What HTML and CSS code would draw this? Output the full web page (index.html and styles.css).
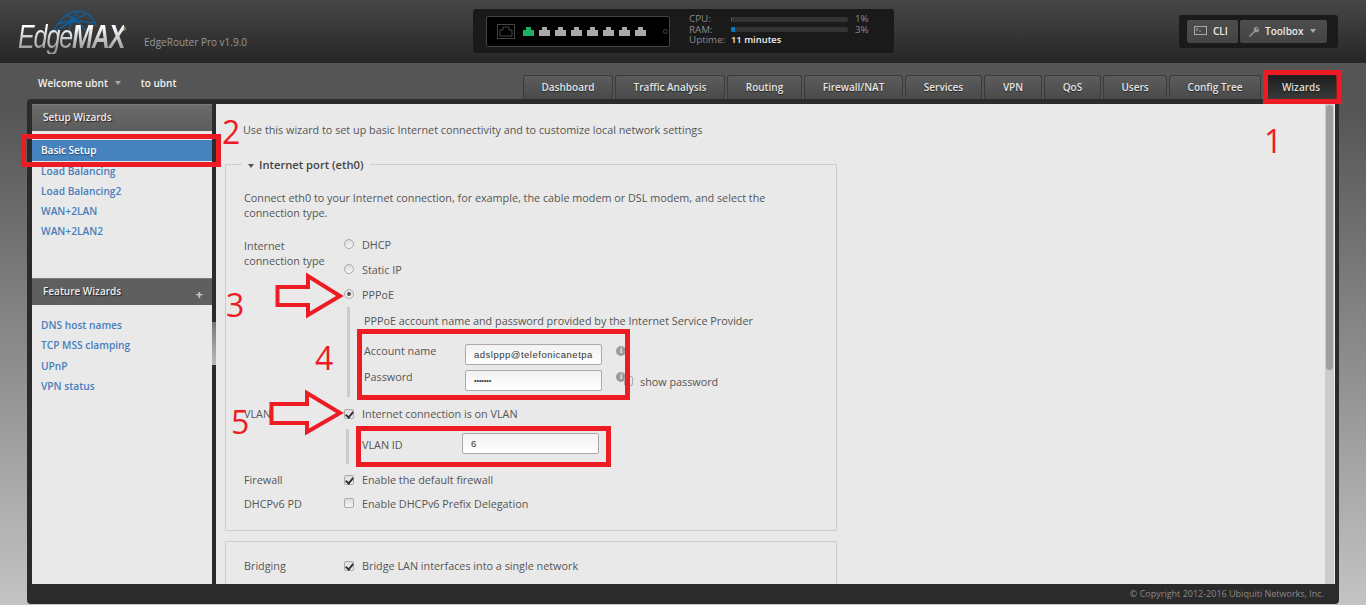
FILE: index.html
```html
<!DOCTYPE html>
<html lang="en">
<head>
<meta charset="utf-8">
<title>EdgeMAX</title>
<link rel="stylesheet" href="styles.css">
</head>
<body>
<div class="page">
  <header class="topbar">
    <div class="brand">
      <div class="logo">
        <svg class="globe" width="46" height="26" viewBox="0 0 46 26"><g fill="none" stroke="#0f5f9e" stroke-width="1.4"><path d="M1 24C5 10 17 1 27 1c8 0 15 7 17 16"/><path d="M5 14c9-3 22-4 36-1"/><path d="M27 1C20 7 17 15 17 25"/><path d="M13 4c8 4 18 11 23 20"/><path d="M4 21c8-6 20-12 30-17"/></g><circle cx="20" cy="11" r="2.4" fill="#0f5f9e"/></svg>
        <span class="logo-text">Edge<b>MAX</b></span><span class="reg">®</span>
      </div>
      <span class="model">EdgeRouter Pro v1.9.0</span>
    </div>
    <div class="status">
      <div class="ports">
        <svg class="uplink" width="18" height="15" viewBox="0 0 18 15"><rect x=".5" y=".5" width="17" height="14" fill="none" stroke="#444"/><path d="M3 12V6h3V3h6v3h3v6z" fill="none" stroke="#444"/></svg>
        <svg class="port on" viewBox="0 0 11 9"><path d="M0 9V3h3V0h5v3h3v6z"/></svg>
        <svg class="port" viewBox="0 0 11 9"><path d="M0 9V3h3V0h5v3h3v6z"/></svg>
        <svg class="port" viewBox="0 0 11 9"><path d="M0 9V3h3V0h5v3h3v6z"/></svg>
        <svg class="port" viewBox="0 0 11 9"><path d="M0 9V3h3V0h5v3h3v6z"/></svg>
        <svg class="port" viewBox="0 0 11 9"><path d="M0 9V3h3V0h5v3h3v6z"/></svg>
        <svg class="port" viewBox="0 0 11 9"><path d="M0 9V3h3V0h5v3h3v6z"/></svg>
        <svg class="port" viewBox="0 0 11 9"><path d="M0 9V3h3V0h5v3h3v6z"/></svg>
        <svg class="port" viewBox="0 0 11 9"><path d="M0 9V3h3V0h5v3h3v6z"/></svg>
        <span class="led"></span>
      </div>
      <div class="stats">
        <span>CPU:</span><span class="bar"><i style="width:1%"></i></span><span class="pct">1%</span>
        <span>RAM:</span><span class="bar"><i style="width:3%"></i></span><span class="pct">3%</span>
        <span>Uptime:</span><span class="uptime">11 minutes</span>
      </div>
    </div>
    <div class="tools">
      <button class="tool cli"><svg width="13" height="9" viewBox="0 0 13 9"><rect x=".5" y=".5" width="12" height="8" fill="none" stroke="#aaa"/><path d="M2 2l2 1.5L2 5M5 5h2" fill="none" stroke="#bbb" stroke-width=".8"/></svg>CLI</button>
      <button class="tool box"><svg width="12" height="12" viewBox="0 0 12 12"><path d="M1 11l5-5a3 3 0 0 1 4-4L8 4l1 1 2-2a3 3 0 0 1-4 4l-5 5z" fill="#999"/></svg>Toolbox<span class="caret"></span></button>
    </div>
  </header>

  <div class="navrow">
    <div class="welcome"><span>Welcome ubnt</span><span class="caret"></span><span class="to">to ubnt</span></div>
    <nav class="tabs">
      <a class="tab">Dashboard</a><a class="tab">Traffic Analysis</a><a class="tab">Routing</a><a class="tab">Firewall/NAT</a><a class="tab">Services</a><a class="tab">VPN</a><a class="tab">QoS</a><a class="tab">Users</a><a class="tab">Config Tree</a><a class="tab active">Wizards</a>
    </nav>
  </div>

  <div class="shell">
    <div class="panels">
      <aside class="side">
        <h3 class="side-head">Setup Wizards</h3>
        <ul class="side-list first">
          <li class="current">Basic Setup</li>
          <li>Load Balancing</li>
          <li>Load Balancing2</li>
          <li>WAN+2LAN</li>
          <li>WAN+2LAN2</li>
        </ul>
        <h3 class="side-head second">Feature Wizards<span class="plus">+</span></h3>
        <ul class="side-list">
          <li>DNS host names</li>
          <li>TCP MSS clamping</li>
          <li>UPnP</li>
          <li>VPN status</li>
        </ul>
      </aside>
      <div class="splitter"><span class="grip"></span></div>
      <main class="content">
        <p class="intro">Use this wizard to set up basic Internet connectivity and to customize local network settings</p>
        <fieldset class="group">
          <legend><span class="tri"></span>Internet port (eth0)</legend>
          <p class="desc">Connect eth0 to your Internet connection, for example, the cable modem or DSL modem, and select the connection type.</p>
          <div class="row first-row"><label class="lbl two">Internet<br>connection type</label><span class="radio"></span><span>DHCP</span></div>
          <div class="row"><span class="lbl"></span><span class="radio"></span><span>Static IP</span></div>
          <div class="row"><span class="lbl"></span><span class="radio sel"></span><span>PPPoE</span></div>
          <div class="sub pppoe">
            <p class="sub-note">PPPoE account name and password provided by the Internet Service Provider</p>
            <div class="field acct"><label>Account name</label><input class="inp" value="adslppp@telefonicanetpa"><span class="info">i</span></div>
            <div class="field"><label>Password</label><input class="inp pw" type="password" value="1234567"><span class="info">i</span><span class="check plain"></span><span class="show">show password</span></div>
          </div>
          <div class="row vlan"><span class="lbl">VLAN</span><span class="check on"></span><span>Internet connection is on VLAN</span></div>
          <div class="sub vlan-sub">
            <div class="field"><label>VLAN ID</label><input class="inp" value="6"></div>
          </div>
          <div class="row fw"><span class="lbl">Firewall</span><span class="check on"></span><span>Enable the default firewall</span></div>
          <div class="row pd"><span class="lbl">DHCPv6 PD</span><span class="check"></span><span>Enable DHCPv6 Prefix Delegation</span></div>
        </fieldset>
        <fieldset class="group lan">
          <div class="row"><span class="lbl">Bridging</span><span class="check on"></span><span>Bridge LAN interfaces into a single network</span></div>
        </fieldset>
      </main>
      <div class="scroll"><span class="thumb"></span></div>
    </div>
    <footer class="foot">© Copyright 2012-2016 Ubiquiti Networks, Inc.</footer>
  </div>

  <svg class="marks" width="1366" height="605" viewBox="0 0 1366 605">
    <g fill="none" stroke="#ed1c24" stroke-width="5">
      <rect x="1265.500" y="72.500" width="73.500" height="29"/>
      <rect x="23.500" y="136.500" width="195" height="28"/>
      <rect x="359.500" y="331.500" width="268" height="66"/>
      <rect x="358.500" y="428.500" width="250" height="36"/>
      <path d="M277.500 287H308V276L340 296 308 315V305H277.500Z" stroke-width="4"/>
      <path d="M271.500 404H307V393L340 413 307 432V423H271.500Z" stroke-width="4"/>
    </g>
  </svg>
  <span class="num n1">1</span>
  <span class="num n2">2</span>
  <span class="num n3">3</span>
  <span class="num n4">4</span>
  <span class="num n5">5</span>
</div>
</body>
</html>
```
FILE: styles.css
```css
* { box-sizing: border-box; }
html, body { margin: 0; padding: 0; height: 605px; overflow: hidden; }
body { font-family: "Open Sans", "Liberation Sans", sans-serif; font-size: 10.800px; color: #555; }
p, h3, ul { margin: 0; padding: 0; }

.page {
  position: relative; width: 1366px; height: 605px; overflow: hidden;
  background: linear-gradient(#555 0, #555 110px, #c4c4c4 605px);
}

/* header */
.topbar {
  height: 63px; display: flex; align-items: flex-start;
  background: linear-gradient(#474747, #262626);
}
.brand { width: 473px; display: flex; align-items: flex-start; }
.logo { position: relative; width: 144px; height: 63px; padding: 20px 0 0 18px; flex: none; }
.globe { position: absolute; left: 52px; top: 10px; }
.logo-text {
  display: inline-block; position: relative; font-family: "Liberation Sans", sans-serif; font-style: italic; font-size: 33px;
  line-height: 34px; letter-spacing: -1.500px; white-space: nowrap; transform: scaleX(.76); transform-origin: 0 50%;
  color: transparent; background: linear-gradient(#fff 20%, #9a9a9a 85%); -webkit-background-clip: text; background-clip: text;
}
.logo-text b { font-weight: 700; }
.reg { position: absolute; left: 122px; top: 26px; font-size: 5px; color: #ccc; }
.model { margin-top: 34px; font-size: 10px; line-height: 16px; color: #999; }

.status {
  width: 421px; height: 44px; margin-top: 9px; padding: 7px 0 0 13px; display: flex;
  background: #1a1a1a; border-radius: 3px;
}
.ports {
  width: 184px; height: 31px; display: flex; align-items: center; padding-left: 10px;
  background: #000; border: 1px solid #444; border-radius: 2px;
}
.uplink { margin-right: 8px; flex: none; }
.port { width: 11px; height: 9px; margin-right: 5px; flex: none; fill: #a9a9a9; }
.port.on { fill: #1fae66; }
.led { width: 5px; height: 5px; margin-left: 12px; border: 1px solid #444; border-radius: 50%; }
.stats {
  display: grid; grid-template-columns: 42px 117px auto; column-gap: 0; margin: -2px 0 0 19px;
  grid-auto-rows: 10.500px; align-items: center; font-size: 9.800px; line-height: 10px; color: #8a8a8a;
}
.bar { display: block; width: 117px; height: 5px; background: #333; border-radius: 2px; overflow: hidden; }
.bar i { display: block; height: 5px; min-width: 1px; background: #0b7fc0; }
.pct { padding-left: 7px; }
.uptime { color: #eee; grid-column: 2 / 4; font-size: 9.400px; font-weight: 600; }

.tools {
  margin: 15px 0 0 285px; width: 159px; height: 33px; padding: 5px 0 0 8px; display: flex; gap: 2px;
  background: #1a1a1a; border-radius: 3px;
}
.tool {
  height: 23px; display: flex; align-items: center; padding: 0 0 2px; border: 0; border-radius: 2px;
  background: linear-gradient(#4d4d4d, #444); color: #e8e8e8;
  font: 600 10px "Open Sans", sans-serif;
}
.tool svg { flex: none; }
.cli { width: 51px; padding-left: 7px; }
.cli svg { margin-right: 6px; }
.box { width: 87px; padding-left: 8px; }
.box svg { margin-right: 5px; }
.caret {
  display: inline-block; width: 0; height: 0; border: 3.500px solid transparent; border-top: 4px solid #aaa; border-bottom: 0;
}
.box .caret { margin-left: 7px; }

/* nav row */
.navrow { height: 36px; display: flex; align-items: flex-end; justify-content: space-between; padding: 0 29px 0 38px; }
.welcome { height: 36px; padding: 4px 0 0; color: #f2f2f2; font-size: 10px; font-weight: 600; line-height: 16px; display: flex; align-items: center; align-self: flex-start; }
.welcome .caret { margin: 0 20px 0 7px; }
.tabs { display: grid; grid-template-columns: 90px 110px 75px 99px 77px 58px 57px 64px 92px 74px; gap: 2px; height: 24px; }
.tab {
  display: flex; align-items: center; justify-content: center; padding-bottom: 2px; font-size: 10px;
  background: linear-gradient(#5c5c5c, #4a4a4a); border: 1px solid #3a3a3a; border-bottom: 0; border-radius: 3px 3px 0 0;
  color: #e6e6e6; font-weight: 600; text-shadow: 0 1px 1px #222;
}
.tab.active { background: linear-gradient(#1e1e1e, #3a3a3a); border-color: #222; color: #ddd; padding-left: 2px; }

/* shell */
.shell { width: 1312px; height: 505px; margin-left: 27px; background: #2b2b2b; border-radius: 4px; padding: 5px 4px 0 5px; }
.panels { height: 480px; display: flex; }
.side { width: 180px; height: 480px; flex: none; background: #e9e9e9; overflow: hidden; }
.side-head {
  height: 27px; padding-left: 11px; line-height: 24px; position: relative;
  background: linear-gradient(#6b6b6b, #5c5c5c); border-top: 1px solid #7a7a7a;
  color: #eee; font-size: 10px; font-weight: 600; text-shadow: 1px 1px 1px #222;
}
.side-head.second { margin-top: 37px; background: #5f5f5f; }
.plus { position: absolute; right: 9px; top: 3px; font-size: 13px; color: #ccc; font-weight: 700; text-shadow: none; }
.side-list { list-style: none; padding-top: 10px; }
.side-list.first { padding-top: 9px; }
.side-list li { height: 20.300px; padding-left: 9px; line-height: 20px; color: #4a7ebb; font-size: 10.200px; font-weight: 600; }
.side-list.first li { height: 20px; }
.side-list li.current { height: 21px; background: #4682bd; border-top: 1px solid #4682bd; line-height: 18px; font-size: 10px; color: #fff; text-shadow: 0 1px 1px #2a4a70; }
.splitter { width: 4px; flex: none; position: relative; }
.grip { position: absolute; left: 0; top: 218px; width: 4px; height: 43px; background: linear-gradient(#777, #bbb); }

.content { flex: 1; min-width: 0; height: 480px; overflow: hidden; background: #e9e9e9; padding: 0 0 0 9px; }
.intro { padding: 18px 0 0 18px; height: 52px; line-height: 16px; }

.group { width: 612px; margin: 0; padding: 0 18px; border: 1px solid #ccc; min-width: 0; height: 375px; display: block; }
.group legend { padding: 0 6px; margin-left: -2px; height: 16px; line-height: 17px; font-size: 11.200px; font-weight: 600; color: #444; }
.tri { display: inline-block; width: 0; height: 0; border: 3.500px solid transparent; border-top: 4px solid #555; border-bottom: 0; margin: 0 5px 1px 0; vertical-align: middle; }
.desc { margin-top: 18px; width: 560px; line-height: 15px; }

.row { display: flex; align-items: center; height: 25px; }
.first-row { margin-top: 12px; position: relative; }
.lbl { width: 100px; flex: none; line-height: 15px; }
.lbl.two { align-self: flex-start; margin-top: 6px; height: 30px; }
.radio, .check {
  flex: none; width: 10px; height: 10px; margin-right: 8px;
  background: linear-gradient(#ddd, #f5f5f5); border: 1px solid #aaa;
}
.radio { border-radius: 50%; position: relative; margin-top: -2px; }
.radio.sel::after { content: ""; position: absolute; left: 2px; top: 2px; width: 4px; height: 4px; border-radius: 50%; background: #555; }
.check { border-radius: 2px; position: relative; }
.check.on::after { content: ""; position: absolute; left: 2px; top: 0; width: 3px; height: 6px; border: solid #333; border-width: 0 2px 2px 0; transform: rotate(40deg); }

.sub { margin-left: 103px; border-left: 3px solid #ccc; padding-left: 14px; position: relative; }
.pppoe { height: 90px; }
.sub-note { padding-top: 6px; line-height: 16px; }
.field { display: flex; align-items: center; height: 21px; position: relative; }
.acct { margin-top: 15px; margin-bottom: 5px; }
.field label { width: 101px; flex: none; margin-top: -9px; }
.inp {
  width: 137px; height: 21px; padding: 0 8px; flex: none;
  font: 9.500px "Liberation Sans", sans-serif; letter-spacing: .5px; color: #333;
  background: linear-gradient(#f2f2f2, #fff); border: 1px solid #aaa; border-radius: 2px;
}
.inp.pw { font-size: 7px; letter-spacing: 0; }
.info {
  width: 10px; height: 10px; margin-left: 14px; margin-top: -8px; border-radius: 50%; background: #9a9a9a; color: #eee;
  font: 700 8px/10px "Liberation Serif", serif; text-align: center; flex: none;
}
.check.plain { margin: 1px 0 0 -2px; width: 9px; height: 10px; background: none; }
.show { margin: 1px 0 0 7px; white-space: nowrap; }

.vlan { margin-top: 4px; }
.vlan-sub { height: 35px; margin-top: 3px; padding-top: 4px; padding-left: 13px; margin-left: 102px; }
.vlan-sub .field label { width: 100px; margin-top: 2px; }
.fw { margin-top: 3px; }
.pd { margin-top: -1px; height: 24px; }

.lan { margin-top: 10px; height: 100px; padding-top: 11px; }

.scroll { width: 10px; flex: none; background: #ccc; border-right: 1px solid #eee; position: relative; }
.thumb { position: absolute; left: 1px; top: 1px; width: 7px; height: 265px; background: #9e9e9e; border-radius: 4px; }
.foot { height: 20px; padding-right: 11px; text-align: right; line-height: 20px; color: #8a8a8a; font-size: 9px; }

/* annotations */
.marks { position: absolute; left: 0; top: 0; pointer-events: none; }
.num { position: absolute; font-family: "Open Sans", sans-serif; font-weight: 400; font-size: 32px; line-height: 34px; color: #ed1c24; }
.n1 { left: 1264px; top: 124px; }
.n2 { left: 222px; top: 115px; }
.n3 { left: 226px; top: 288px; }
.n4 { left: 315px; top: 341px; }
.n5 { left: 231px; top: 405px; }
```
